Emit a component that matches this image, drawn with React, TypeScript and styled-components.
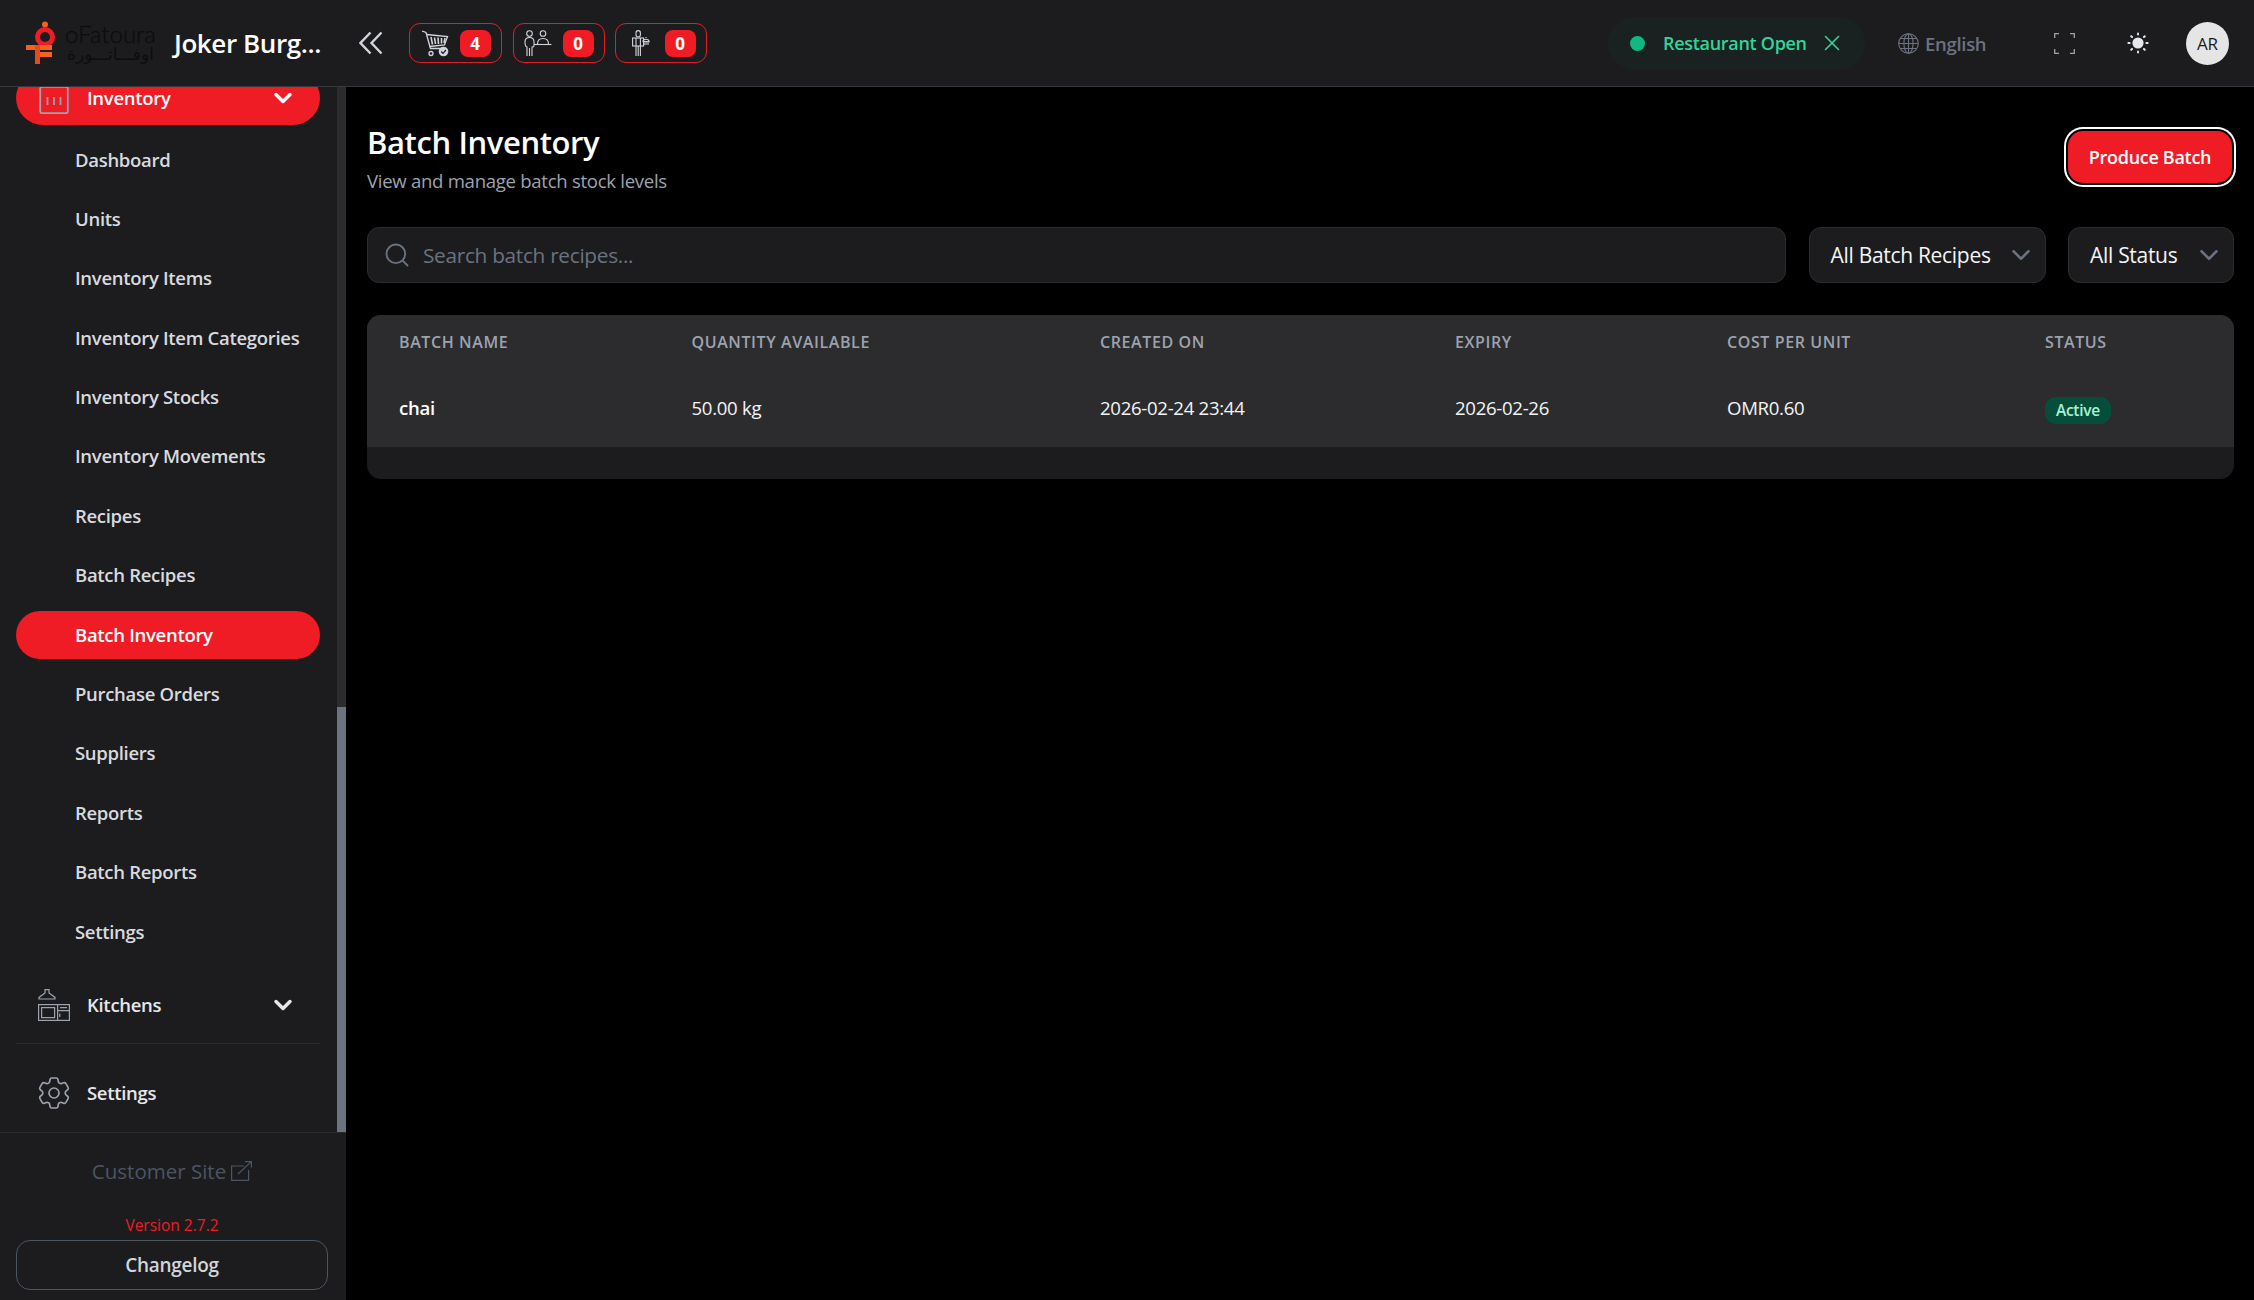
import React from 'react';
import styled, { createGlobalStyle } from 'styled-components';
import { ChevronDown, Search, X } from 'lucide-react';
import { HiOutlineCog6Tooth } from 'react-icons/hi2';

const GlobalStyle = createGlobalStyle`
  html, body {
    margin: 0;
    background: #000;
    font-family: 'Open Sans', 'Noto Sans', sans-serif;
  }
  * {
    box-sizing: border-box;
  }
`;

const Page = styled.div`
  display: flex;
  flex-direction: column;
  height: 100vh;
  overflow: hidden;
`;

const Header = styled.header`
  display: flex;
  align-items: center;
  flex: none;
  height: 87px;
  padding: 0 25px 0 26px;
  background: #1c1c1e;
  border-bottom: 1px solid #38383a;
`;

const Logo = styled.div`
  display: flex;
  align-items: center;
  flex: none;
  width: 131px;
  height: 44px;
  gap: 9px;
`;

const LogoWords = styled.div`
  display: flex;
  flex-direction: column;
  align-items: center;
  width: 93px;
`;

const LogoLatin = styled.span`
  font-family: Lato, sans-serif;
  font-size: 24px;
  font-weight: 300;
  line-height: 23px;
  color: #0d0d0d;
  -webkit-text-stroke: 0.3px #0d0d0d;
`;

const LogoArabic = styled.span`
  font-family: 'DejaVu Sans', sans-serif;
  font-size: 17px;
  line-height: 19px;
  color: #0d0d0d;
`;

const Brand = styled.div`
  width: 150px;
  margin-left: 17px;
  font-size: 26px;
  font-weight: 600;
  color: #fff;
  white-space: nowrap;
  letter-spacing: -0.4px;
`;

const Collapse = styled.svg`
  margin: 0 26px 0 35px;
  flex: none;
`;

const Counter = styled.div<{ $w: number; $pad: number; $gap: number }>`
  display: flex;
  align-items: center;
  justify-content: space-between;
  width: ${({ $w }) => $w}px;
  height: 40px;
  margin-right: ${({ $gap }) => $gap}px;
  padding: 0 10.5px 0 ${({ $pad }) => $pad}px;
  border: 1.5px solid #e11d27;
  border-radius: 11px;
`;

const Count = styled.span`
  display: flex;
  align-items: center;
  justify-content: center;
  width: 31px;
  height: 27px;
  border-radius: 8px;
  background: #ef1c25;
  color: #fff;
  font-size: 17px;
  font-weight: 700;
`;

const HeaderRight = styled.div`
  display: flex;
  align-items: center;
  margin-left: auto;
`;

const OpenPill = styled.div`
  display: flex;
  align-items: center;
  width: 257px;
  height: 53px;
  padding-left: 22px;
  border-radius: 27px;
  background: #1a2221;
  color: #34d399;
  font-size: 18px;
  font-weight: 600;
  letter-spacing: -0.3px;
`;

const Dot = styled.span`
  width: 15px;
  height: 15px;
  margin-right: 18px;
  border-radius: 50%;
  background: #10b981;
`;

const PillClose = styled(X)`
  margin-left: 12px;
`;

const Language = styled.div`
  display: flex;
  align-items: center;
  gap: 6px;
  margin-left: 33px;
  width: 156px;
  color: #6b7280;
  font-size: 18.5px;
  font-weight: 600;
  letter-spacing: -0.3px;
`;

const ThemeIcon = styled.svg`
  margin: 0 37px 0 52px;
`;

const Avatar = styled.div`
  display: flex;
  align-items: center;
  justify-content: center;
  width: 43px;
  height: 43px;
  border-radius: 50%;
  background: #e5e5e5;
  color: #1c1c1e;
  font-size: 17px;
`;

const Body = styled.div`
  display: flex;
  flex: 1;
  min-height: 0;
`;

const Sidebar = styled.aside`
  display: flex;
  flex-direction: column;
  flex: none;
  width: 346px;
  background: #1c1c1e;
`;

const NavArea = styled.div`
  display: flex;
  flex: 1;
  min-height: 0;
  overflow: hidden;
`;

const NavList = styled.nav`
  flex: 1;
  margin-top: -16px;
  padding: 0 17px 0 16px;
`;

const NavRow = styled.div<{ $active?: boolean }>`
  display: flex;
  align-items: center;
  height: 54px;
  padding: 0 23px 0 22px;
  border-radius: 27px;
  background: ${({ $active }) => ($active ? '#ef1c25' : 'transparent')};
  color: ${({ $active }) => ($active ? '#fff' : '#e5e7eb')};
  font-size: 18.5px;
  font-weight: 600;
  letter-spacing: -0.3px;
`;

const NavLabel = styled.span`
  margin: 0 0 1px 17px;
  line-height: 20px;
`;

const NavChevron = styled(ChevronDown)`
  margin-left: auto;
`;

const SubList = styled.div`
  display: flex;
  flex-direction: column;
  gap: 11.4px;
  padding: 11px 0 22px;
`;

const SubItem = styled.div<{ $active?: boolean }>`
  display: flex;
  align-items: center;
  height: 48px;
  padding: 0 0 2px 59px;
  border-radius: 24px;
  background: ${({ $active }) => ($active ? '#ef1c25' : 'transparent')};
  color: ${({ $active }) => ($active ? '#fff' : '#d8dadf')};
  font-size: 18.5px;
  font-weight: 600;
  letter-spacing: -0.3px;
`;

const Rule = styled.hr`
  margin: 11px 0 22px;
  border: 0;
  border-top: 1px solid #2c2c2e;
`;

const ScrollTrack = styled.div`
  display: flex;
  flex: none;
  width: 9px;
  padding-top: 620px;
  background: #2c2c2e;
`;

const ScrollThumb = styled.div`
  width: 100%;
  background: #6b7280;
`;

const SideFooter = styled.div`
  flex: none;
  height: 168px;
  padding: 0 18px 0 16px;
  border-top: 1px solid #2c2c2e;
`;

const SiteLink = styled.div`
  display: flex;
  align-items: center;
  justify-content: center;
  gap: 5px;
  height: 76px;
  color: #4b5563;
  font-size: 20.5px;
`;

const Version = styled.div`
  margin-top: 6px;
  color: #ef1c25;
  font-size: 15.5px;
  line-height: 20px;
  text-align: center;
`;

const Changelog = styled.div`
  display: flex;
  align-items: center;
  justify-content: center;
  height: 50px;
  margin-top: 5px;
  border: 1px solid #4b5563;
  border-radius: 14px;
  color: #d1d5db;
  font-size: 19px;
  font-weight: 600;
  letter-spacing: -0.3px;
`;

const Main = styled.main`
  flex: 1;
  padding: 36px 20px 0 21px;
  background: #000;
`;

const TitleRow = styled.div`
  display: flex;
  justify-content: space-between;
`;

const Title = styled.h1`
  margin: 0;
  color: #fff;
  font-size: 31px;
  font-weight: 600;
  line-height: 38px;
  letter-spacing: -0.4px;
`;

const Subtitle = styled.p`
  margin: 7px 0 0;
  color: #9ca3af;
  font-size: 18.6px;
  line-height: 26px;
  letter-spacing: -0.3px;
`;

const ProduceButton = styled.button`
  width: 164px;
  height: 52px;
  margin: 8px 2px 0 0;
  border: 0;
  border-radius: 15px;
  background: #ef1c25;
  box-shadow: 0 0 0 2px #000, 0 0 0 4px #fff;
  color: #fff;
  font-family: inherit;
  font-size: 18px;
  font-weight: 600;
  letter-spacing: -0.3px;
`;

const Filters = styled.div`
  display: flex;
  gap: 22.5px;
  margin-top: 33px;
`;

const SearchBox = styled.div`
  display: flex;
  align-items: center;
  flex: 1;
  height: 56px;
  padding-left: 15px;
  border: 1px solid #2c2c2e;
  border-radius: 12px;
  background: #1c1c1e;
  color: #6b7280;
  font-size: 20.8px;
  letter-spacing: -0.3px;
`;

const SearchText = styled.span`
  margin-left: 12px;
`;

const SelectBox = styled.div<{ $w: number }>`
  display: flex;
  align-items: center;
  justify-content: space-between;
  width: ${({ $w }) => $w}px;
  height: 56px;
  padding: 0 9px 0 21px;
  border: 1px solid #2c2c2e;
  border-radius: 12px;
  background: #1c1c1e;
  color: #f3f4f6;
  font-size: 21px;
  letter-spacing: -0.3px;
`;

const TableCard = styled.div`
  margin-top: 32px;
  overflow: hidden;
  border-radius: 14px;
  background: #1c1c1e;
  padding-bottom: 32px;
`;

const columns = '292.5px 408.5px 355px 272px 318px 1fr';

const HeadRow = styled.div`
  display: grid;
  grid-template-columns: ${columns};
  align-items: center;
  height: 56px;
  padding-bottom: 2px;
  background: #2c2c2e;
  color: #9ca3af;
  font-size: 16px;
  font-weight: 600;
  letter-spacing: 0.6px;
`;

const DataRow = styled.div`
  display: grid;
  grid-template-columns: ${columns};
  align-items: center;
  height: 76px;
  padding-bottom: 3px;
  background: #2c2c2e;
  color: #f3f4f6;
  font-size: 18.6px;
  letter-spacing: -0.3px;
`;

const Cell = styled.div`
  padding-left: 32px;
`;

const NameCell = styled(Cell)`
  color: #fff;
  font-weight: 600;
`;

const StatusBadge = styled.span`
  display: inline-block;
  margin-top: 6px;
  padding: 0 11px;
  border-radius: 11px;
  background: #064e3b;
  color: #a7f3d0;
  font-size: 15.5px;
  font-weight: 600;
  line-height: 27px;
`;

const LogoMark = () => (
  <svg width="29" height="44" viewBox="0 0 29 44" style={{ flex: 'none' }}>
    <circle cx="19" cy="3.5" r="3" fill="#f26322" />
    <circle cx="19" cy="16" r="7.5" fill="none" stroke="#ee1c25" strokeWidth="5" />
    <path d="M12.5 16 V27 H16 V22 Z" fill="#ee1c25" />
    <rect x="0" y="24" width="26" height="5" fill="#f26322" />
    <rect x="11" y="31" width="15" height="5" fill="#f26322" />
    <rect x="9" y="24" width="5" height="19" fill="#e8491d" />
  </svg>
);

const CartIcon = () => (
  <svg width="28" height="27" viewBox="0 0 28 27" fill="none" stroke="#d1d5db" strokeWidth="1.3">
    <path d="M1 1 L5 2.5 L9.5 18.5 H20" />
    <path d="M5.5 4.5 L26.5 6.5 L23.5 15 L8.5 16.5" />
    <path d="M10 7 L11.5 14.5 M13.5 7.5 L14.5 14 M17 7.5 L17.5 14 M20.5 8 L20.5 13.5 M24 8 L23 13" strokeWidth="1.6" />
    <circle cx="10" cy="23.5" r="2" />
    <circle cx="22.5" cy="21.5" r="4.8" fill="#d1d5db" stroke="none" />
    <path d="M20.2 21.5 L22 23.3 L25 20" stroke="#1c1c1e" strokeWidth="1.2" />
  </svg>
);

const HostIcon = () => (
  <svg width="28" height="27" viewBox="0 0 28 27" fill="none" stroke="#d1d5db" strokeWidth="1.1">
    <circle cx="5.5" cy="3.5" r="2.8" />
    <path d="M3 26 V17 C1.5 16.5 1 15 1 12 C1 9 3 7.5 5.5 7.5 C8 7.5 10 9 10 12 V16 C10 16.5 9 17 8 17 V26 M5.5 18 V26" />
    <path d="M10 14.5 H27.5" />
    <circle cx="19" cy="3.5" r="2.8" />
    <path d="M13.5 14 C13.5 10 16 8.5 19 8.5 C22 8.5 24.5 10 24.5 14" />
  </svg>
);

const WaiterIcon = () => (
  <svg width="18" height="27" viewBox="0 0 18 27" fill="none" stroke="#d1d5db" strokeWidth="1.1">
    <rect x="4" y="0.6" width="4.4" height="6.4" rx="2.2" />
    <rect x="0.6" y="8" width="11" height="8" />
    <path d="M4 8 V26 M8.4 8 V26 M6.2 16 V26 M11.6 12 H17.5" />
    <path d="M11 11.5 C11 8.5 17 8.5 17 11.5 Z M14 8 V7" />
    <path d="M11 14 H17" />
  </svg>
);

const InventoryIcon = () => (
  <svg width="32" height="32" viewBox="0 0 32 32" fill="none" stroke="#9ca3af" strokeWidth="1.8">
    <rect x="2.2" y="4.8" width="27.6" height="26.4" rx="2" />
    <path d="M11 4.5 V0 M21 4.5 V0 M9.5 15 V23 M16 15 V23 M22.5 15 V23" />
  </svg>
);

const KitchenIcon = () => (
  <svg width="32" height="32" viewBox="0 0 32 32" fill="none" stroke="#9ca3af" strokeWidth="1.2">
    <path d="M1 10 H17 V8.4 L11 4 V0.6 H7 V4 L1 8.4 Z" />
    <rect x="0.6" y="15.6" width="30.8" height="15.8" />
    <rect x="3.6" y="18.6" width="13" height="10" />
    <path d="M19.6 15.6 V31.4 M19.6 21.6 H31.4 M22 18.6 H29 M21.8 24.5 V28" />
  </svg>
);

const ExternalIcon = () => (
  <svg width="21" height="20" viewBox="0 0 21 20" fill="none" stroke="#4b5563" strokeWidth="1.2">
    <path d="M13 5 H0.6 V19.4 H17.6 V9" />
    <path d="M7 13 L20.4 0.6 M14 0.6 H20.4 V6.5" />
  </svg>
);

const GlobeIcon = () => (
  <svg width="21" height="21" viewBox="0 0 21 21" fill="none" stroke="#6b7280" strokeWidth="1.1">
    <circle cx="10.5" cy="10.5" r="9.8" />
    <ellipse cx="10.5" cy="10.5" rx="4.6" ry="9.8" />
    <path d="M10.5 0.7 V20.3 M0.7 10.5 H20.3 M2.2 5.5 H18.8 M2.2 15.5 H18.8" />
  </svg>
);

const FullscreenIcon = () => (
  <svg width="21" height="21" viewBox="0 0 21 21" fill="none" stroke="#9ca3af" strokeWidth="1.3">
    <path d="M0.7 5 V0.7 H5 M16 0.7 H20.3 V5 M20.3 16 V20.3 H16 M5 20.3 H0.7 V16" />
  </svg>
);

const SunRays = [0, 45, 90, 135, 180, 225, 270, 315];

const App = () => {
  const subItems = [
    'Dashboard',
    'Units',
    'Inventory Items',
    'Inventory Item Categories',
    'Inventory Stocks',
    'Inventory Movements',
    'Recipes',
    'Batch Recipes',
    'Batch Inventory',
    'Purchase Orders',
    'Suppliers',
    'Reports',
    'Batch Reports',
    'Settings',
  ];

  return (
    <Page>
      <GlobalStyle />
      <Header>
        <Logo>
          <LogoMark />
          <LogoWords>
            <LogoLatin>oFatoura</LogoLatin>
            <LogoArabic>اوفـــاتـــورة</LogoArabic>
          </LogoWords>
        </Logo>
        <Brand>Joker Burg...</Brand>
        <Collapse width="24" height="24" viewBox="0 0 24 24" fill="none" stroke="#d1d5db" strokeWidth="2.4">
          <path d="M11.5 1.5 L1.5 12 L11.5 22.5 M22.5 1.5 L12.5 12 L22.5 22.5" />
        </Collapse>
        <Counter $w={93} $pad={10.5} $gap={11}>
          <CartIcon />
          <Count>4</Count>
        </Counter>
        <Counter $w={92} $pad={9.5} $gap={10}>
          <HostIcon />
          <Count>0</Count>
        </Counter>
        <Counter $w={92} $pad={15.5} $gap={0}>
          <WaiterIcon />
          <Count>0</Count>
        </Counter>
        <HeaderRight>
          <OpenPill>
            <Dot />
            Restaurant Open
            <PillClose size={26} strokeWidth={1.5} />
          </OpenPill>
          <Language>
            <GlobeIcon />
            English
          </Language>
          <FullscreenIcon />
          <ThemeIcon width="22" height="22" viewBox="0 0 22 22" fill="#e5e7eb">
            <circle cx="11" cy="11" r="5.6" />
            {SunRays.map((deg) => (
              <rect key={deg} x="10" y="0.4" width="2" height="3.2" rx="1" transform={`rotate(${deg} 11 11)`} />
            ))}
          </ThemeIcon>
          <Avatar>AR</Avatar>
        </HeaderRight>
      </Header>
      <Body>
        <Sidebar>
          <NavArea>
            <NavList>
              <NavRow $active>
                <InventoryIcon />
                <NavLabel>Inventory</NavLabel>
                <NavChevron size={28} strokeWidth={3} />
              </NavRow>
              <SubList>
                {subItems.map((item) => (
                  <SubItem key={item} $active={item === 'Batch Inventory'}>
                    {item}
                  </SubItem>
                ))}
              </SubList>
              <NavRow>
                <KitchenIcon />
                <NavLabel>Kitchens</NavLabel>
                <NavChevron size={28} strokeWidth={3} />
              </NavRow>
              <Rule />
              <NavRow>
                <HiOutlineCog6Tooth size={40} color="#9ca3af" style={{ margin: '0 -4px', strokeWidth: 1 }} />
                <NavLabel>Settings</NavLabel>
              </NavRow>
            </NavList>
            <ScrollTrack>
              <ScrollThumb />
            </ScrollTrack>
          </NavArea>
          <SideFooter>
            <SiteLink>
              Customer Site
              <ExternalIcon />
            </SiteLink>
            <Version>Version 2.7.2</Version>
            <Changelog>Changelog</Changelog>
          </SideFooter>
        </Sidebar>
        <Main>
          <TitleRow>
            <div>
              <Title>Batch Inventory</Title>
              <Subtitle>View and manage batch stock levels</Subtitle>
            </div>
            <ProduceButton>Produce Batch</ProduceButton>
          </TitleRow>
          <Filters>
            <SearchBox>
              <Search size={28} strokeWidth={1.6} />
              <SearchText>Search batch recipes...</SearchText>
            </SearchBox>
            <SelectBox $w={237}>
              All Batch Recipes
              <ChevronDown size={30} strokeWidth={2} color="#6b7280" />
            </SelectBox>
            <SelectBox $w={166}>
              All Status
              <ChevronDown size={30} strokeWidth={2} color="#6b7280" />
            </SelectBox>
          </Filters>
          <TableCard>
            <HeadRow>
              <Cell>BATCH NAME</Cell>
              <Cell>QUANTITY AVAILABLE</Cell>
              <Cell>CREATED ON</Cell>
              <Cell>EXPIRY</Cell>
              <Cell>COST PER UNIT</Cell>
              <Cell>STATUS</Cell>
            </HeadRow>
            <DataRow>
              <NameCell>chai</NameCell>
              <Cell>50.00 kg</Cell>
              <Cell>2026-02-24 23:44</Cell>
              <Cell>2026-02-26</Cell>
              <Cell>OMR0.60</Cell>
              <Cell>
                <StatusBadge>Active</StatusBadge>
              </Cell>
            </DataRow>
          </TableCard>
        </Main>
      </Body>
    </Page>
  );
};

export default App;
